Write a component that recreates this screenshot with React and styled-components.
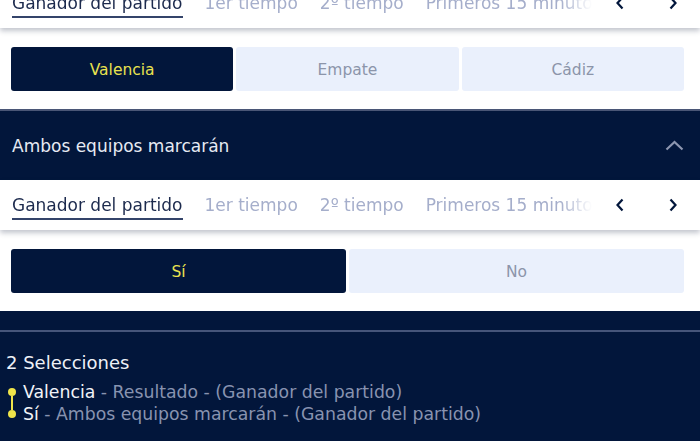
import React from 'react';
import styled, { createGlobalStyle } from 'styled-components';

const GlobalStyle = createGlobalStyle`
  html, body {
    margin: 0;
    padding: 0;
    background: #ffffff;
    overflow: hidden;
  }
  body {
    font-family: "DejaVu Sans", Verdana, sans-serif;
  }
`;

const NAVY = '#02163b';

const Page = styled.div`
  width: 700px;
  height: 441px;
  overflow: hidden;
`;

const Scroller = styled.div`
  margin-top: -22px;
`;

const Market = styled.section`
  background: #ffffff;
`;

const TabBar = styled.div`
  position: relative;
  z-index: 1;
  display: flex;
  align-items: center;
  height: 50px;
  background: #ffffff;
  box-shadow: 0 3px 5px rgba(40, 50, 80, 0.28);
`;

const TabList = styled.div`
  flex: 1;
  display: flex;
  align-items: center;
  gap: 22px;
  padding-left: 12px;
  overflow: hidden;
  white-space: nowrap;
  -webkit-mask-image: linear-gradient(to right, #000 560px, transparent 592px);
  mask-image: linear-gradient(to right, #000 560px, transparent 592px);
`;

const Tab = styled.span`
  font-size: 17px;
  line-height: 20px;
  padding-top: 5px;
  padding-bottom: 3px;
  border-bottom: 2px solid ${p => (p.$active ? '#34446a' : 'transparent')};
  color: ${p => (p.$active ? '#1c2a4d' : '#a5aecb')};
`;

const Arrows = styled.div`
  display: flex;
  width: 107px;
  flex-shrink: 0;
`;

const ArrowButton = styled.button`
  flex: 1;
  height: 50px;
  border: none;
  background: transparent;
  padding: 0;
  display: flex;
  align-items: center;
  justify-content: center;
  color: ${NAVY};
`;

const Options = styled.div`
  display: grid;
  grid-template-columns: repeat(${p => p.$cols}, 1fr);
  gap: 3px;
  padding: 19px 16px 18px 11px;
`;

const Option = styled.button`
  height: 44px;
  border: none;
  border-radius: 3px;
  padding-top: 2px;
  font-family: "DejaVu Sans", Verdana, sans-serif;
  font-size: 15.5px;
  background: ${p => (p.$selected ? NAVY : '#eaf0fc')};
  color: ${p => (p.$selected ? '#e9e24f' : '#8c95aa')};
`;

const MarketHeader = styled.div`
  display: flex;
  align-items: center;
  justify-content: space-between;
  height: 69px;
  padding: 0 16px 0 12px;
  background: ${NAVY};
  border-top: 2px solid #4a5676;
  color: #e6eaf3;
  font-size: 17px;
`;

const Band = styled.div`
  height: 19px;
  background: ${NAVY};
  border-bottom: 2px solid #46557a;
`;

const Slip = styled.div`
  background: ${NAVY};
  padding: 21px 6px 30px 6px;
  color: #eef1f7;
`;

const SlipTitle = styled.div`
  font-size: 18px;
  line-height: 20px;
  margin-bottom: 8px;
`;

const SlipList = styled.div`
  display: flex;
  gap: 6px;
`;

const Rail = styled.div`
  display: flex;
  flex-direction: column;
  align-items: center;
  width: 11px;
  padding-top: 7px;
`;

const Dot = styled.span`
  width: 8px;
  height: 8px;
  border-radius: 50%;
  background: #efe44a;
`;

const RailLine = styled.span`
  width: 2px;
  height: 14px;
  background: #efe44a;
`;

const Lines = styled.div`
  display: flex;
  flex-direction: column;
`;

const Line = styled.div`
  font-size: 17.3px;
  line-height: 22px;
  color: #8893b0;
  white-space: nowrap;
`;

const Pick = styled.span`
  color: #f1f3f8;
`;

function ChevronLeft() {
  return (
    <svg width="10" height="14" viewBox="0 0 10 14">
      <path d="M7.5 1.5 L2.5 7 L7.5 12.5" fill="none" stroke="currentColor" strokeWidth="2.2" />
    </svg>
  );
}

function ChevronRight() {
  return (
    <svg width="10" height="14" viewBox="0 0 10 14">
      <path d="M2.5 1.5 L7.5 7 L2.5 12.5" fill="none" stroke="currentColor" strokeWidth="2.2" />
    </svg>
  );
}

function ChevronUp() {
  return (
    <svg width="19" height="11" viewBox="0 0 19 11">
      <path d="M1.5 9.5 L9.5 2 L17.5 9.5" fill="none" stroke="#8d96b0" strokeWidth="2.2" />
    </svg>
  );
}

const tabs = ['Ganador del partido', '1er tiempo', '2º tiempo', 'Primeros 15 minutos', 'Hándicap'];

function Tabs() {
  return (
    <TabBar>
      <TabList>
        {tabs.map((t, i) => (
          <Tab key={t} $active={i === 0}>{t}</Tab>
        ))}
      </TabList>
      <Arrows>
        <ArrowButton><ChevronLeft /></ArrowButton>
        <ArrowButton><ChevronRight /></ArrowButton>
      </Arrows>
    </TabBar>
  );
}

function MarketBlock({ options, selected }) {
  return (
    <Market>
      <Tabs />
      <Options $cols={options.length}>
        {options.map(o => (
          <Option key={o} $selected={o === selected}>{o}</Option>
        ))}
      </Options>
    </Market>
  );
}

export default function App() {
  return (
    <Page>
      <GlobalStyle />
      <Scroller>
        <MarketBlock options={['Valencia', 'Empate', 'Cádiz']} selected="Valencia" />
        <MarketHeader>
          <span>Ambos equipos marcarán</span>
          <ChevronUp />
        </MarketHeader>
        <MarketBlock options={['Sí', 'No']} selected="Sí" />
        <Band />
        <Slip>
          <SlipTitle>2 Selecciones</SlipTitle>
          <SlipList>
            <Rail>
              <Dot />
              <RailLine />
              <Dot />
            </Rail>
            <Lines>
              <Line><Pick>Valencia</Pick> - Resultado - (Ganador del partido)</Line>
              <Line><Pick>Sí</Pick> - Ambos equipos marcarán - (Ganador del partido)</Line>
            </Lines>
          </SlipList>
        </Slip>
      </Scroller>
    </Page>
  );
}
